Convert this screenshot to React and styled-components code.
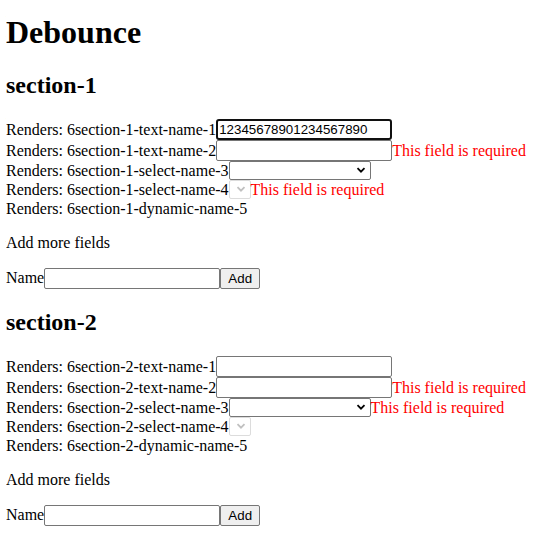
import React from 'react';
import styled, { createGlobalStyle } from 'styled-components';

const GlobalStyle = createGlobalStyle`
    body{
        margin: 6px;
        font-family: "Liberation Serif", "Times New Roman", serif;
        font-size: 16px;
        color: #000;
        background: #fff;
    }
`

const Title = styled.h1`
    font-size: 2em;
    margin: 8px 0 21px;
    font-weight: bold;
`

const SectionTitle = styled.h2`
    font-size: 1.5em;
    margin: 0.83em 0;
    font-weight: bold;
`

const FieldList = styled.div`
    display: flex;
    flex-direction: column;
`

const FieldRow = styled.div`
    display: flex;
    align-items: center;
    line-height: 19px;
    min-height: 19px;
`

const TextInput = styled.input`
    box-sizing: border-box;
    font-family: "Liberation Sans", Arial, sans-serif;
    font-size: 13.33px;
    width: 176px;
    height: 21px;
    padding: ${p => p.focused ? '0 1px' : '1px 2px'};
    margin: 0;
    border: ${p => p.focused ? '2px solid #101010' : '1px solid #767676'};
    border-radius: ${p => p.focused ? '3px' : '2px'};
    outline: none;
    color: #000;
    background: #fff;
`

const SelectBox = styled.div`
    box-sizing: border-box;
    width: ${p => p.disabled ? '22px' : '142px'};
    height: 19px;
    border: 1px solid ${p => p.disabled ? '#dcdcdc' : '#767676'};
    border-radius: 2px;
    background: #fff;
    display: flex;
    align-items: center;
    justify-content: flex-end;
    padding-right: 4px;
`

const ErrorText = styled.span`
    color: #ff0000;
`

const Note = styled.p`
    margin: 16px 0;
`

const AddRow = styled.div`
    display: flex;
    align-items: center;
    margin: 16px 0;
`

const AddButton = styled.button`
    box-sizing: border-box;
    font-family: "Liberation Sans", Arial, sans-serif;
    font-size: 13.33px;
    height: 21px;
    width: 40px;
    padding: 1px 6px;
    margin: 0;
    background: #efefef;
    border: 1px solid #767676;
    border-radius: 2px;
    color: #000;
`

function Chevron({ color }) {
    return (
        <svg width="10" height="10" viewBox="0 0 10 10">
            <path d="M1.5 3.2 L5 6.7 L8.5 3.2" fill="none" stroke={color} strokeWidth="1.8" />
        </svg>
    )
}

function Select({ disabled }) {
    return (
        <SelectBox disabled={disabled}>
            <Chevron color={disabled ? '#c0c0c0' : '#000'} />
        </SelectBox>
    )
}

function Section({ name, value, selectError }) {
    return (
        <div>
            <SectionTitle>{name}</SectionTitle>
            <FieldList>
                <FieldRow>
                    Renders: 6{name}-text-name-1
                    <TextInput focused={!!value} defaultValue={value} />
                </FieldRow>
                <FieldRow>
                    Renders: 6{name}-text-name-2
                    <TextInput />
                    <ErrorText>This field is required</ErrorText>
                </FieldRow>
                <FieldRow>
                    Renders: 6{name}-select-name-3
                    <Select />
                    {selectError === 3 && <ErrorText>This field is required</ErrorText>}
                </FieldRow>
                <FieldRow>
                    Renders: 6{name}-select-name-4
                    <Select disabled />
                    {selectError === 4 && <ErrorText>This field is required</ErrorText>}
                </FieldRow>
                <FieldRow>Renders: 6{name}-dynamic-name-5</FieldRow>
            </FieldList>
            <Note>Add more fields</Note>
            <AddRow>
                Name
                <TextInput />
                <AddButton>Add</AddButton>
            </AddRow>
        </div>
    )
}

export default function App() {
    return (
        <>
            <GlobalStyle />
            <Title>Debounce</Title>
            <Section name="section-1" value="12345678901234567890" selectError={4} />
            <Section name="section-2" selectError={3} />
        </>
    )
}
